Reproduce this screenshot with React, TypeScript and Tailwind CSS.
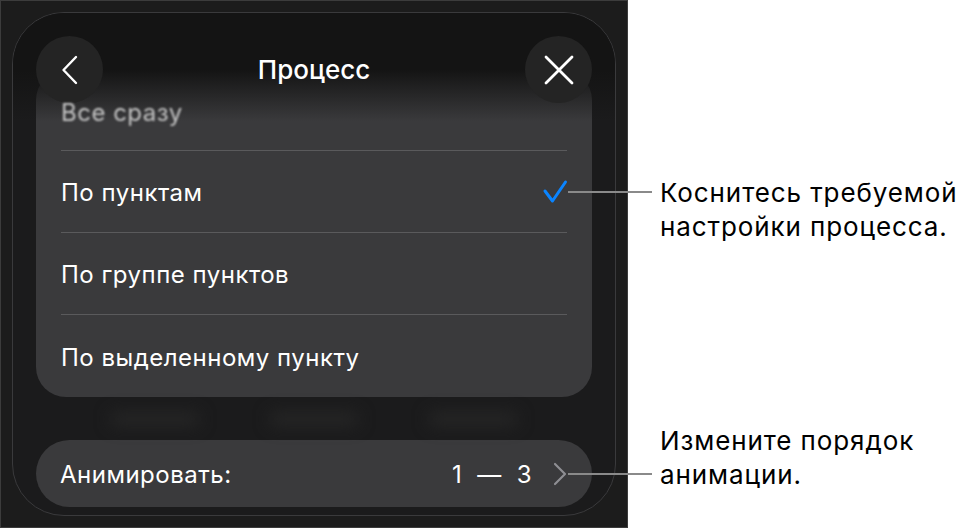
const font = { fontFamily: 'Inter, "Noto Sans", sans-serif' }

const rows = [
  { label: 'По пунктам', checked: true },
  { label: 'По группе пунктов', checked: false },
  { label: 'По выделенному пункту', checked: false },
]

function RoundButton({ children }: { children: React.ReactNode }) {
  return (
    <div className="size-[67px] rounded-full bg-[#242424] flex items-center justify-center">
      {children}
    </div>
  )
}

function Checkmark() {
  return (
    <svg width="26" height="26" viewBox="0 0 26 26" fill="none">
      <path d="M3 12 L10.5 22 L23.5 3" stroke="#0a84ff" strokeWidth="3" strokeLinecap="round" strokeLinejoin="round" />
    </svg>
  )
}

function Sheet() {
  return (
    <div className="relative h-full rounded-[52px] border border-[#3a3a3c] bg-[#1b1b1c] overflow-hidden px-[23px] pt-[23px]">
      {/* dark band behind the header, fading into the list */}
      <div className="absolute top-0 inset-x-0 h-[108px] z-10 bg-[linear-gradient(to_bottom,#141414_0px,#141414_57px,rgba(20,20,20,0)_108px)]" />

      <div className="relative z-20 flex items-center justify-between">
        <RoundButton>
          <svg width="18" height="30" viewBox="0 0 18 30" fill="none">
            <path d="M15 2 L2.5 15 L15 28" stroke="white" strokeWidth="2.4" strokeLinecap="round" strokeLinejoin="round" />
          </svg>
        </RoundButton>
        <span className="text-white text-[26px] font-medium">Процесс</span>
        <RoundButton>
          <svg width="30" height="30" viewBox="0 0 30 30" fill="none">
            <path d="M2 2 L28 28 M28 2 L2 28" stroke="white" strokeWidth="2.8" strokeLinecap="round" />
          </svg>
        </RoundButton>
      </div>

      <div className="-mt-[33px] rounded-[30px] bg-[#3a3a3c] px-[25px] text-[24px] tracking-[0.5px]">
        <div className="h-[81px] pt-[6px] flex items-center border-b border-[#5a5a5c]">
          <span className="text-[#c4c4c4] blur-[0.8px] relative z-20">Все сразу</span>
        </div>
        {rows.map((r, i) => (
          <div
            key={r.label}
            className={`h-[82px] pt-[3px] flex items-center justify-between ${i < rows.length - 1 ? 'border-b border-[#5a5a5c]' : ''}`}
          >
            <span className="text-white">{r.label}</span>
            {r.checked && (
              <span className="-mr-[1px] -mt-[3px]">
                <Checkmark />
              </span>
            )}
          </div>
        ))}
      </div>

      {/* blurred controls showing through */}
      <div className="h-[43px] flex items-center justify-around px-[40px]">
        <div className="w-[90px] h-[14px] rounded-full bg-[#262626] blur-[8px]" />
        <div className="w-[90px] h-[14px] rounded-full bg-[#262626] blur-[8px]" />
        <div className="w-[90px] h-[14px] rounded-full bg-[#262626] blur-[8px]" />
      </div>

      <div className="h-[67px] pt-[2px] rounded-full bg-[#3a3a3c] flex items-center pl-[24px] pr-[24px] text-white text-[24px] tracking-[0.5px]">
        <span className="flex-1">Анимировать:</span>
        <span className="flex items-center gap-[15px] -ml-[2px]">
          <span>1</span>
          <span>—</span>
          <span>3</span>
        </span>
        <svg className="ml-[20px] -mt-[2px]" width="16" height="24" viewBox="0 0 16 24" fill="none">
          <path d="M3 2 L13 12 L3 22" stroke="#8e8e93" strokeWidth="2.2" strokeLinecap="round" strokeLinejoin="round" />
        </svg>
      </div>
    </div>
  )
}

export default function App() {
  return (
    <div className="relative w-[974px] h-[529px] bg-white flex" style={font}>
      <div className="w-[628px] h-[528px] bg-[#1c1c1c] border border-[#3c3c3c] p-[11px]">
        <Sheet />
      </div>

      <div className="flex-1 pl-[32px] text-black text-[26px] leading-[34px] tracking-[0.9px] whitespace-nowrap">
        <p className="mt-[176px]">
          Коснитесь требуемой
          <br />
          настройки процесса.
        </p>
        <p className="mt-[180px]">
          Измените порядок
          <br />
          анимации.
        </p>
      </div>

      {/* leader lines */}
      <div className="absolute left-[568px] top-[191px] w-[84px] h-[2px] bg-[#8a8a8a]" />
      <div className="absolute left-[568px] top-[473px] w-[84px] h-[2px] bg-[#8a8a8a]" />
    </div>
  )
}
